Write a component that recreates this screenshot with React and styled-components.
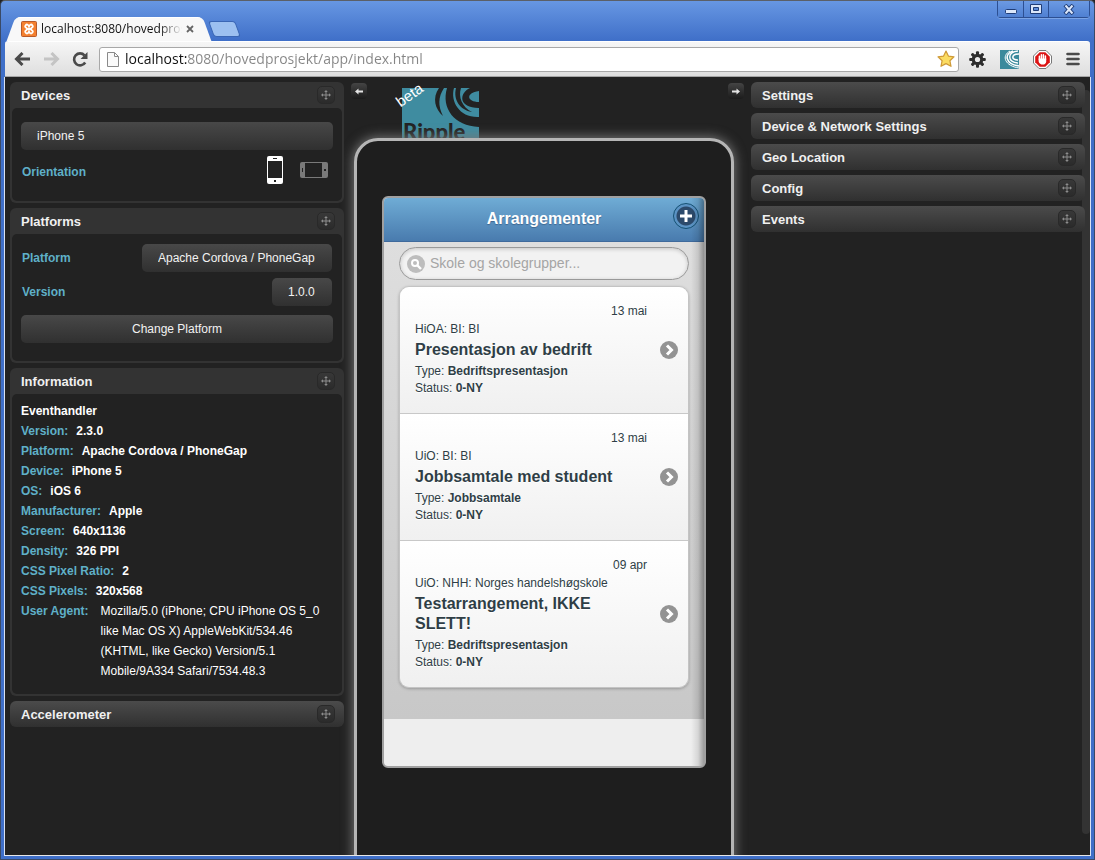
import React, { useState } from "react";
import styled, { createGlobalStyle, css } from "styled-components";

const GlobalStyle = createGlobalStyle`
  * {
    box-sizing: border-box;
  }

  body {
    margin: 0;
    background: #222;
    font-family: "Liberation Sans", Arial, sans-serif;
    font-size: 12px;
  }

  button, input, select {
    font-family: inherit;
    font-size: inherit;
  }

  h1, h2, h3, p, ul, dl, dd {
    margin: 0;
    padding: 0;
  }
`;

/* ---------- browser window ---------- */

const Window = styled.div`
  display: flex;
  flex-direction: column;
  height: 100vh;
  padding: 0 4px 3px;
  border: 1px solid #3a4a66;
  border-top-color: #5b6068;
  border-radius: 5px 5px 0 0;
  background: linear-gradient(#6797e3, #3f6fc8 40px, #3f6fc8);
  overflow: hidden;
`;

const TitleBar = styled.header`
  display: flex;
  align-items: flex-end;
  height: 40px;
  flex: none;
`;

const Tab = styled.div`
  position: relative;
  z-index: 1;
  display: flex;
  align-items: center;
  width: 196px;
  height: 24px;
  margin-left: 6px;
  padding: 0 13px 0 10px;
  gap: 4px;

  &::before,
  &::after {
    content: "";
    position: absolute;
    z-index: -1;
    top: 0;
    bottom: 0;
    width: 60%;
    background: #f8f8f8;
    border-top: 1px solid #fff;
  }

  &::before {
    left: 0;
    border-radius: 5px 0 0 0;
    transform: skewX(-20deg);
  }

  &::after {
    right: 0;
    border-radius: 0 5px 0 0;
    transform: skewX(20deg);
  }
`;

const TabTitle = styled.span`
  flex: 1;
  overflow: hidden;
  white-space: nowrap;
  font-family: "Open Sans", "Noto Sans", sans-serif;
  font-size: 12px;
  line-height: 20px;
  color: #111;
  mask-image: linear-gradient(90deg, #000 84%, transparent);
`;

const PlainButton = styled.button`
  display: inline-flex;
  align-items: center;
  justify-content: center;
  padding: 0;
  border: 0;
  background: none;
  cursor: pointer;
`;

const NewTab = styled.button`
  width: 27px;
  height: 16px;
  margin: 0 0 4px 4px;
  padding: 0;
  border: 1px solid #3a66b4;
  border-radius: 3px;
  background: #9cc0f0;
  transform: skewX(20deg);
`;

const WindowButtons = styled.div`
  display: flex;
  align-self: flex-start;
  height: 17px;
  margin-left: auto;
  border: 1px solid #2c4f92;
  border-top: 0;
  border-radius: 0 0 4px 4px;
  box-shadow: 0 1px 0 #7ba4e6;
`;

const WindowButton = styled(PlainButton)`
  width: ${(p) => (p.$wide ? 41 : 25)}px;
  background: linear-gradient(#6c9ae3, #4f80d2);

  & + & {
    border-left: 1px solid #2c4f92;
  }
`;

const Toolbar = styled.div`
  display: flex;
  align-items: center;
  flex: none;
  height: 36px;
  padding: 0 8px 0 9px;
  border-top: 1px solid #fff;
  border-bottom: 1px solid #a5a5a5;
  border-radius: 3px 3px 0 0;
  background: linear-gradient(#f6f6f6, #dedede);
`;

const NavButtons = styled.div`
  display: flex;
  align-items: center;
  gap: 12px;
  margin-right: 10px;
`;

const AddressBar = styled.form`
  display: flex;
  align-items: center;
  flex: 1;
  height: 25px;
  padding: 0 3px 0 7px;
  gap: 6px;
  border: 1px solid #a8a8a8;
  border-radius: 3px;
  background: #fff;
`;

const AddressInput = styled.input`
  flex: 1;
  min-width: 0;
  padding: 0;
  border: 0;
  outline: 0;
  font-family: "Open Sans", "Noto Sans", sans-serif;
  font-size: 14px;
  line-height: 20px;
  color: #888;
  background: linear-gradient(90deg, #111 62px, #858585 62px);
  background-clip: text;
  -webkit-text-fill-color: transparent;
`;

const Extensions = styled.div`
  display: flex;
  align-items: center;
  gap: 14px;
  margin: 0 2px 0 10px;
`;

/* ---------- page ---------- */

const Page = styled.main`
  position: relative;
  display: grid;
  grid-template-columns: 334px 1fr 334px;
  flex: 1;
  min-height: 0;
  padding: 5px 5px 0;
  background: #222;
  border-bottom: 1px solid #e8e8e8;
  box-shadow: -1px 0 0 #d8e2f2, 1px 0 0 #d8e2f2;
  overflow: hidden;
`;

const ScrollTrack = styled.div`
  position: absolute;
  top: 13px;
  right: 0;
  bottom: 21px;
  width: 8px;
  border-radius: 4px;
  background: #333;
`;

const Column = styled.div`
  position: relative;
  z-index: 1;
  display: flex;
  flex-direction: column;
  gap: 5px;
`;

const PanelBox = styled.section`
  border-radius: 6px;
  background: #333;
  ${(p) =>
    p.$open
      ? css`
          padding: 0 2px 2px;
        `
      : css`
          background: linear-gradient(#4b4b4b, #303030);
        `}
`;

const PanelHeader = styled.div`
  display: flex;
  align-items: center;
  justify-content: space-between;
  height: 26px;
  padding: 0 ${(p) => (p.$open ? 7 : 9)}px 0 ${(p) => (p.$open ? 9 : 11)}px;
`;

const PanelTitle = styled.h2`
  padding-top: 2px;
  font-size: 13px;
  line-height: 18px;
  color: #f0f0f0;
`;

const MoveButton = styled(PlainButton)`
  width: 18px;
  height: 18px;
  border: 1px solid #292929;
  border-radius: 5px;
  background: linear-gradient(#383838, #2b2b2b);
  cursor: move;
`;

const PanelBody = styled.div`
  display: flex;
  flex-direction: column;
  padding: ${(p) => p.$pad};
  border-radius: 5px;
  background: #222;
`;

const controlStyle = css`
  height: 28px;
  border: 0;
  border-radius: 5px;
  background: linear-gradient(#484848, #303030);
  color: #f2f2f2;
  font-size: 12px;
`;

const Select = styled.select`
  ${controlStyle}
  appearance: none;
  padding: 0 17px 0 16px;
`;

const WideButton = styled.button`
  ${controlStyle}
  margin-top: 9px;
`;

const Row = styled.div`
  display: flex;
  align-items: center;
  justify-content: space-between;
  padding: 0 1px;
  margin-top: ${(p) => p.$gap || 0}px;
`;

const Label = styled.label`
  font-size: 12px;
  line-height: 20px;
  font-weight: bold;
  color: #5fb0c8;
`;

const OrientationLabel = styled(Label)`
  padding-top: 3px;
`;

const Orientation = styled.div`
  display: flex;
  align-items: center;
  gap: 17px;
  margin-right: 4px;
`;

const InfoTitle = styled.h3`
  font-size: 12px;
  line-height: 20px;
  color: #fff;
`;

const InfoList = styled.dl`
  font-size: 12px;
  line-height: 20px;
`;

const InfoRow = styled.div`
  display: flex;
  gap: ${(p) => (p.$wide ? 12 : 8)}px;
`;

const InfoName = styled.dt`
  flex: none;
  font-weight: bold;
  color: #5fb0c8;
`;

const InfoValue = styled.dd`
  color: #fff;
  font-weight: ${(p) => (p.$plain ? "normal" : "bold")};
`;

/* ---------- emulated device ---------- */

const Stage = styled.div`
  display: flex;
  flex-direction: column;
  align-items: center;
  min-width: 0;
  padding: 0 7px;
`;

const StageTop = styled.div`
  display: flex;
  align-items: flex-start;
  justify-content: space-between;
  align-self: stretch;
  height: 56px;
`;

const ArrowButton = styled(PlainButton)`
  width: 16px;
  height: 16px;
  margin-top: 1px;
  border-radius: 4px;
  background: linear-gradient(#444, #1b1b1b);
`;

const Brand = styled.div`
  position: relative;
  flex: 1;
  padding: 6px 0 0 35px;
`;

const Beta = styled.span`
  position: absolute;
  top: 4px;
  left: 28px;
  font-size: 15px;
  line-height: 18px;
  color: #fff;
  transform: rotate(-35deg);
`;

const Phone = styled.div`
  position: relative;
  flex: none;
  width: 380px;
  min-height: 770px;
  margin-right: 7px;
  padding: 55px 25px;
  border: 3px solid #b5b5b5;
  border-radius: 24px;
  background: #1e1e1e;
  box-shadow: 0 0 12px 1px #777;
`;

const Screen = styled.div`
  display: flex;
  flex-direction: column;
  height: 572px;
  border: 2px solid #a0a0a0;
  border-radius: 6px;
  background: #eee;
  position: relative;

  &::after {
    content: "";
    position: absolute;
    inset: 0;
    border-radius: 4px;
    background: linear-gradient(270deg, rgba(0, 0, 0, 0.35), rgba(0, 0, 0, 0.1) 6px, transparent 13px);
    pointer-events: none;
  }
`;

const AppHeader = styled.div`
  display: grid;
  grid-template-columns: 1fr auto 1fr;
  align-items: center;
  height: 44px;
  padding: 0 5px 2px;
  border-bottom: 1px solid #3f6a9c;
  border-radius: 4px 4px 0 0;
  background: linear-gradient(#6facd5, #497bae);
`;

const AppTitle = styled.h1`
  grid-column: 2;
  font-size: 16px;
  line-height: 20px;
  color: #fff;
  text-shadow: 0 1px 1px #3e6790;
`;

const AddButton = styled(PlainButton)`
  justify-self: end;
  width: 26px;
  height: 26px;
  margin-bottom: 6px;
  border: 1px solid #145072;
  border-radius: 13px;
  background: radial-gradient(circle, #2c4a6b 9px, #5b93c4 10px);
`;

const AppContent = styled.div`
  height: 477px;
  padding: 5px 15px 0;
  background: linear-gradient(#dedede, #c8c8c8);
`;

const SearchBox = styled.label`
  display: flex;
  align-items: center;
  height: 33px;
  padding: 0 8px 0 7px;
  gap: 5px;
  border: 1px solid #999;
  border-radius: 17px;
  background: #f2f2f2;
  box-shadow: inset 0 1px 4px rgba(0, 0, 0, 0.2);
`;

const SearchInput = styled.input`
  flex: 1;
  min-width: 0;
  padding: 0 0 1px;
  border: 0;
  outline: 0;
  background: none;
  font-size: 14px;
  color: #333;

  &::placeholder {
    color: #a5a5a5;
  }
`;

const EventList = styled.ul`
  margin-top: 6px;
  list-style: none;
  border: 1px solid #c4c4c4;
  border-radius: 10px;
  overflow: hidden;
  box-shadow: 0 1px 3px rgba(0, 0, 0, 0.25);
`;

const EventItem = styled.li`
  background: linear-gradient(#fff, #f0f0f0);

  & + & {
    border-top: 1px solid #c8c8c8;
  }
`;

const EventLink = styled.a`
  display: flex;
  align-items: center;
  padding: 15px 10px 16px 15px;
  color: #2f3e46;
  text-decoration: none;
  text-shadow: 0 1px 0 #fff;
`;

const EventText = styled.div`
  flex: 1;
  margin-right: 13px;
`;

const EventDate = styled.p`
  line-height: 18px;
  text-align: right;
`;

const EventSchool = styled.p`
  line-height: 18px;
`;

const EventName = styled.h3`
  margin: 2px 0 3px;
  max-width: 200px;
  font-size: 16px;
  line-height: 20px;
`;

const EventMeta = styled.p`
  line-height: 17px;
`;

/* ---------- icons ---------- */

const ChromeArrow = ({ color, flip }) => (
  <svg width="17" height="14" viewBox="0 0 17 14">
    <g transform={flip ? "translate(17 0) scale(-1 1)" : undefined} fill="none" stroke={color} strokeWidth="3">
      <path d="M8.5 1 2.5 7l6 6M2.5 7H16" />
    </g>
  </svg>
);

const ReloadIcon = () => (
  <svg width="17" height="17" viewBox="0 0 17 17">
    <path d="M13.2 11.5A6 6 0 1 1 12.5 4.300" fill="none" stroke="#4a4a4a" strokeWidth="2.600" />
    <path d="M15.500 1v7H8.500z" fill="#4a4a4a" />
  </svg>
);

const XamppIcon = () => (
  <svg width="16" height="16" viewBox="0 0 16 16">
    <rect x="0.500" y="0.500" width="15" height="15" rx="1" fill="#f4802f" stroke="#b85a2a" />
    <path
      d="M5 8h6M4.500 4.500C3 6.500 6.500 7 6.500 8s-3.500 1.500-2 3.500 3 .5 3.500-1c.5 1.500 2 3 3.500 1s-2-2.500-2-3.500 3.500-1.500 2-3.500-3-.5-3.500 1c-.5-1.500-2-3-3.500-1z"
      fill="none"
      stroke="#fff"
      strokeWidth="1.800"
    />
  </svg>
);

const CloseIcon = () => (
  <svg width="8" height="8" viewBox="0 0 8 8">
    <path d="M1 1l6 6M7 1L1 7" stroke="#666" strokeWidth="1.800" />
  </svg>
);

const FileIcon = () => (
  <svg width="12" height="15" viewBox="0 0 12 15">
    <path d="M.5.5h7l4 4v10H.5zM7.500.5v4h4" fill="#fafafa" stroke="#8a8a8a" />
  </svg>
);

const StarIcon = () => (
  <svg width="18" height="18" viewBox="0 0 18 18">
    <path
      d="M9 1l2.400 5.100 5.600.7-4.100 3.900 1.100 5.600L9 13.600l-5 2.700 1.100-5.600L1 6.800l5.600-.7z"
      fill="#fbdc62"
      stroke="#cf9a38"
      strokeWidth="1.200"
      strokeLinejoin="round"
    />
  </svg>
);

const GearIcon = () => (
  <svg width="17" height="17" viewBox="-8.500 -8.500 17 17">
    <g fill="#2d2d2d">
      {[0, 45, 90, 135].map((a) => (
        <rect key={a} x="-1.500" y="-8.300" width="3" height="16.600" rx="1" transform={`rotate(${a})`} />
      ))}
      <circle r="5.800" />
    </g>
    <circle r="2.600" fill="#ececec" />
  </svg>
);

const RippleIcon = () => (
  <svg width="19" height="19" viewBox="0 0 19 19">
    <rect width="19" height="19" fill="#3b8a9c" />
    <g fill="none" stroke="#fff">
      <path d="M10 1C1 6 5 16 19 18" strokeWidth="1" />
      <path d="M13 1C4 4 5 14 19 16" strokeWidth="1.600" />
      <path d="M18 1C7 2 7 12 18 13" strokeWidth="1.400" />
      <path d="M19 4C11 4 11 10 18 10" strokeWidth="1.600" />
    </g>
  </svg>
);

const AdblockIcon = () => (
  <svg width="19" height="19" viewBox="0 0 19 19">
    <path d="M6 .5h7L18.500 6v7L13 18.500H6L.5 13V6z" fill="#fff" stroke="#777" />
    <path d="M6.700 2.200h5.600l4.500 4.500v5.600l-4.500 4.500H6.700l-4.500-4.500V6.700z" fill="#dc1414" />
    <path
      d="M6.400 10V6.200M8.400 9V4.700M10.400 9V4.700M12.400 10V6"
      stroke="#fff"
      strokeWidth="1.500"
      strokeLinecap="round"
    />
    <path d="M5.700 8.500h7.500v3.200q-.5 2.800-3.500 2.800t-4-2.800z" fill="#fff" />
  </svg>
);

const MenuIcon = () => (
  <svg width="14" height="14" viewBox="0 0 14 14">
    <path d="M1.500 2h11M1.500 7h11M1.500 12h11" stroke="#4a4a4a" strokeWidth="2.600" strokeLinecap="round" />
  </svg>
);

const MoveIcon = () => (
  <svg width="10" height="10" viewBox="0 0 10 10">
    <path d="M5 1v8M1 5h8" stroke="#8c8c8c" />
    <path d="M5 0l1.800 2H3.200zM5 10l1.800-2H3.200zM0 5l2-1.800v3.600zM10 5L8 3.200v3.600z" fill="#8c8c8c" />
  </svg>
);

const SmallArrow = ({ flip }) => (
  <svg width="8" height="7" viewBox="0 0 8 7">
    <g transform={flip ? "translate(8 0) scale(-1 1)" : undefined}>
      <path d="M0 3.500L3.500.5v6zM3 2.500h5v2H3z" fill="#e4e4e4" />
    </g>
  </svg>
);

const PortraitIcon = () => (
  <svg width="16" height="28" viewBox="0 0 16 28">
    <rect width="16" height="28" rx="2" fill="#fff" />
    <path d="M1 5h14v17H1zM6 2h4v1H6zM7 24h2v2H7z" fill="#222" />
  </svg>
);

const LandscapeIcon = () => (
  <svg width="28" height="16" viewBox="0 0 28 16">
    <rect width="28" height="16" rx="2" fill="#7a7a7a" />
    <path d="M5 1h17v14H5zM2 6h1v4H2zM24 7h2v2h-2z" fill="#222" />
  </svg>
);

const RippleLogo = () => (
  <svg width="77" height="60" viewBox="0 0 77 60" style={{ display: "block" }}>
    <rect width="77" height="60" fill="#3f8ca0" />
    <g fill="#222">
      <path d="M37 0C30 10 33 21 41 28 36 18 36 9 42 0z" />
      <path d="M45 0C39 20 52 38 77 39V29C58 30 48 14 52 0z" />
      <path d="M54 0C51 12 58 22 70 24 60 19 56 9 59 0z" />
      <path d="M68 0C57 5 56 20 77 20V14C65 14 63 5 77 3V0z" />
    </g>
    <text x="1" y="52" fill="#222" fontFamily="Lato, sans-serif" fontSize="22" fontWeight="900">
      Ripple
    </text>
  </svg>
);

const SearchIcon = () => (
  <svg width="18" height="18" viewBox="0 0 18 18">
    <circle cx="9" cy="9" r="9" fill="#bdbdbd" />
    <circle cx="8" cy="8" r="3" fill="none" stroke="#fff" strokeWidth="2" />
    <path d="M10 10l4 4" stroke="#fff" strokeWidth="2.400" />
  </svg>
);

const ChevronIcon = () => (
  <svg width="18" height="18" viewBox="0 0 18 18">
    <circle cx="9" cy="9" r="9" fill="#939393" />
    <path d="M7 4.500L11.500 9 7 13.500" fill="none" stroke="#fff" strokeWidth="3" />
  </svg>
);

const PlusIcon = () => (
  <svg width="12" height="12" viewBox="0 0 12 12">
    <path d="M6 0v12M0 6h12" stroke="#fff" strokeWidth="3" />
  </svg>
);

/* ---------- data ---------- */

const info = [
  ["Version:", "2.3.0"],
  ["Platform:", "Apache Cordova / PhoneGap"],
  ["Device:", "iPhone 5"],
  ["OS:", "iOS 6"],
  ["Manufacturer:", "Apple"],
  ["Screen:", "640x1136"],
  ["Density:", "326 PPI"],
  ["CSS Pixel Ratio:", "2"],
  ["CSS Pixels:", "320x568"],
];

const userAgent =
  "Mozilla/5.0 (iPhone; CPU iPhone OS 5_0 like Mac OS X) AppleWebKit/534.46 (KHTML, like Gecko) Version/5.1 Mobile/9A334 Safari/7534.48.3";

const events = [
  { date: "13 mai", school: "HiOA: BI: BI", name: "Presentasjon av bedrift", type: "Bedriftspresentasjon" },
  { date: "13 mai", school: "UiO: BI: BI", name: "Jobbsamtale med student", type: "Jobbsamtale" },
  {
    date: "09 apr",
    school: "UiO: NHH: Norges handelshøgskole",
    name: "Testarrangement, IKKE SLETT!",
    type: "Bedriftspresentasjon",
  },
];

const settingsPanels = ["Settings", "Device & Network Settings", "Geo Location", "Config", "Events"];

/* ---------- components ---------- */

function Panel({ title, pad, children }) {
  const open = Boolean(children);
  return (
    <PanelBox $open={open}>
      <PanelHeader $open={open}>
        <PanelTitle>{title}</PanelTitle>
        <MoveButton aria-label={`Move ${title}`}>
          <MoveIcon />
        </MoveButton>
      </PanelHeader>
      {open && <PanelBody $pad={pad}>{children}</PanelBody>}
    </PanelBox>
  );
}

function BrowserChrome() {
  const [url, setUrl] = useState("localhost:8080/hovedprosjekt/app/index.html");

  return (
    <>
      <TitleBar>
        <Tab>
          <XamppIcon />
          <TabTitle>localhost:8080/hovedpros</TabTitle>
          <PlainButton aria-label="Close tab">
            <CloseIcon />
          </PlainButton>
        </Tab>
        <NewTab aria-label="New tab" />
        <WindowButtons>
          <WindowButton aria-label="Minimize">
            <svg width="12" height="12" viewBox="0 0 12 12">
              <rect x="0.500" y="6.500" width="11" height="4" rx="1" fill="#dbe7fa" stroke="#1f3d78" />
            </svg>
          </WindowButton>
          <WindowButton aria-label="Maximize">
            <svg width="12" height="11" viewBox="0 0 12 11">
              <path d="M.5.5h11v9H.5zM3.500 3.500v3h5v-3z" fill="#dbe7fa" stroke="#1f3d78" fillRule="evenodd" />
            </svg>
          </WindowButton>
          <WindowButton $wide aria-label="Close">
            <svg width="12" height="11" viewBox="0 0 12 11">
              <path d="M2 1l8 9M10 1L2 10" stroke="#1f3d78" strokeWidth="4" />
              <path d="M2.500 1.500l7 8M9.500 1.500l-7 8" stroke="#dbe7fa" strokeWidth="2" />
            </svg>
          </WindowButton>
        </WindowButtons>
      </TitleBar>
      <Toolbar>
        <NavButtons>
          <PlainButton aria-label="Back">
            <ChromeArrow color="#4a4a4a" />
          </PlainButton>
          <PlainButton aria-label="Forward">
            <ChromeArrow color="#c4c4c4" flip />
          </PlainButton>
          <PlainButton aria-label="Reload">
            <ReloadIcon />
          </PlainButton>
        </NavButtons>
        <AddressBar onSubmit={(e) => e.preventDefault()}>
          <FileIcon />
          <AddressInput aria-label="Address" value={url} onChange={(e) => setUrl(e.target.value)} />
          <PlainButton type="button" aria-label="Bookmark">
            <StarIcon />
          </PlainButton>
        </AddressBar>
        <Extensions>
          <PlainButton aria-label="Options">
            <GearIcon />
          </PlainButton>
          <PlainButton aria-label="Ripple">
            <RippleIcon />
          </PlainButton>
          <PlainButton aria-label="Adblock">
            <AdblockIcon />
          </PlainButton>
          <PlainButton aria-label="Menu">
            <MenuIcon />
          </PlainButton>
        </Extensions>
      </Toolbar>
    </>
  );
}

function LeftColumn() {
  return (
    <Column>
      <Panel title="Devices" pad="14px 9px 17px">
        <Select aria-label="Device">
          <option>iPhone 5</option>
        </Select>
        <Row $gap={6}>
          <OrientationLabel as="span">Orientation</OrientationLabel>
          <Orientation>
            <PlainButton aria-label="Portrait">
              <PortraitIcon />
            </PlainButton>
            <PlainButton aria-label="Landscape">
              <LandscapeIcon />
            </PlainButton>
          </Orientation>
        </Row>
      </Panel>
      <Panel title="Platforms" pad="10px 9px 18px">
        <Row>
          <Label htmlFor="platform">Platform</Label>
          <Select id="platform">
            <option>Apache Cordova / PhoneGap</option>
          </Select>
        </Row>
        <Row $gap={6}>
          <Label htmlFor="version">Version</Label>
          <Select id="version">
            <option>1.0.0</option>
          </Select>
        </Row>
        <WideButton>Change Platform</WideButton>
      </Panel>
      <Panel title="Information" pad="7px 9px 13px">
        <InfoTitle>Eventhandler</InfoTitle>
        <InfoList>
          {info.map(([name, value]) => (
            <InfoRow key={name}>
              <InfoName>{name}</InfoName>
              <InfoValue>{value}</InfoValue>
            </InfoRow>
          ))}
          <InfoRow $wide>
            <InfoName>User Agent:</InfoName>
            <InfoValue $plain>{userAgent}</InfoValue>
          </InfoRow>
        </InfoList>
      </Panel>
      <Panel title="Accelerometer" />
    </Column>
  );
}

function EventCard({ event }) {
  return (
    <EventItem>
      <EventLink href="#event">
        <EventText>
          <EventDate>{event.date}</EventDate>
          <EventSchool>{event.school}</EventSchool>
          <EventName>{event.name}</EventName>
          <EventMeta>
            Type: <b>{event.type}</b>
          </EventMeta>
          <EventMeta>
            Status: <b>0-NY</b>
          </EventMeta>
        </EventText>
        <ChevronIcon />
      </EventLink>
    </EventItem>
  );
}

function Emulator() {
  return (
    <Stage>
      <StageTop>
        <ArrowButton aria-label="Collapse left panel">
          <SmallArrow />
        </ArrowButton>
        <Brand>
          <RippleLogo />
          <Beta>beta</Beta>
        </Brand>
        <ArrowButton aria-label="Collapse right panel">
          <SmallArrow flip />
        </ArrowButton>
      </StageTop>
      <Phone>
        <Screen>
          <AppHeader>
            <AppTitle>Arrangementer</AppTitle>
            <AddButton aria-label="Nytt arrangement">
              <PlusIcon />
            </AddButton>
          </AppHeader>
          <AppContent>
            <SearchBox>
              <SearchIcon />
              <SearchInput type="text" placeholder="Skole og skolegrupper..." />
            </SearchBox>
            <EventList>
              {events.map((event) => (
                <EventCard key={event.name} event={event} />
              ))}
            </EventList>
          </AppContent>
        </Screen>
      </Phone>
    </Stage>
  );
}

function App() {
  return (
    <>
      <GlobalStyle />
      <Window>
        <BrowserChrome />
        <Page>
          <LeftColumn />
          <Emulator />
          <Column>
            {settingsPanels.map((title) => (
              <Panel key={title} title={title} />
            ))}
          </Column>
          <ScrollTrack />
        </Page>
      </Window>
    </>
  );
}

export default App;
